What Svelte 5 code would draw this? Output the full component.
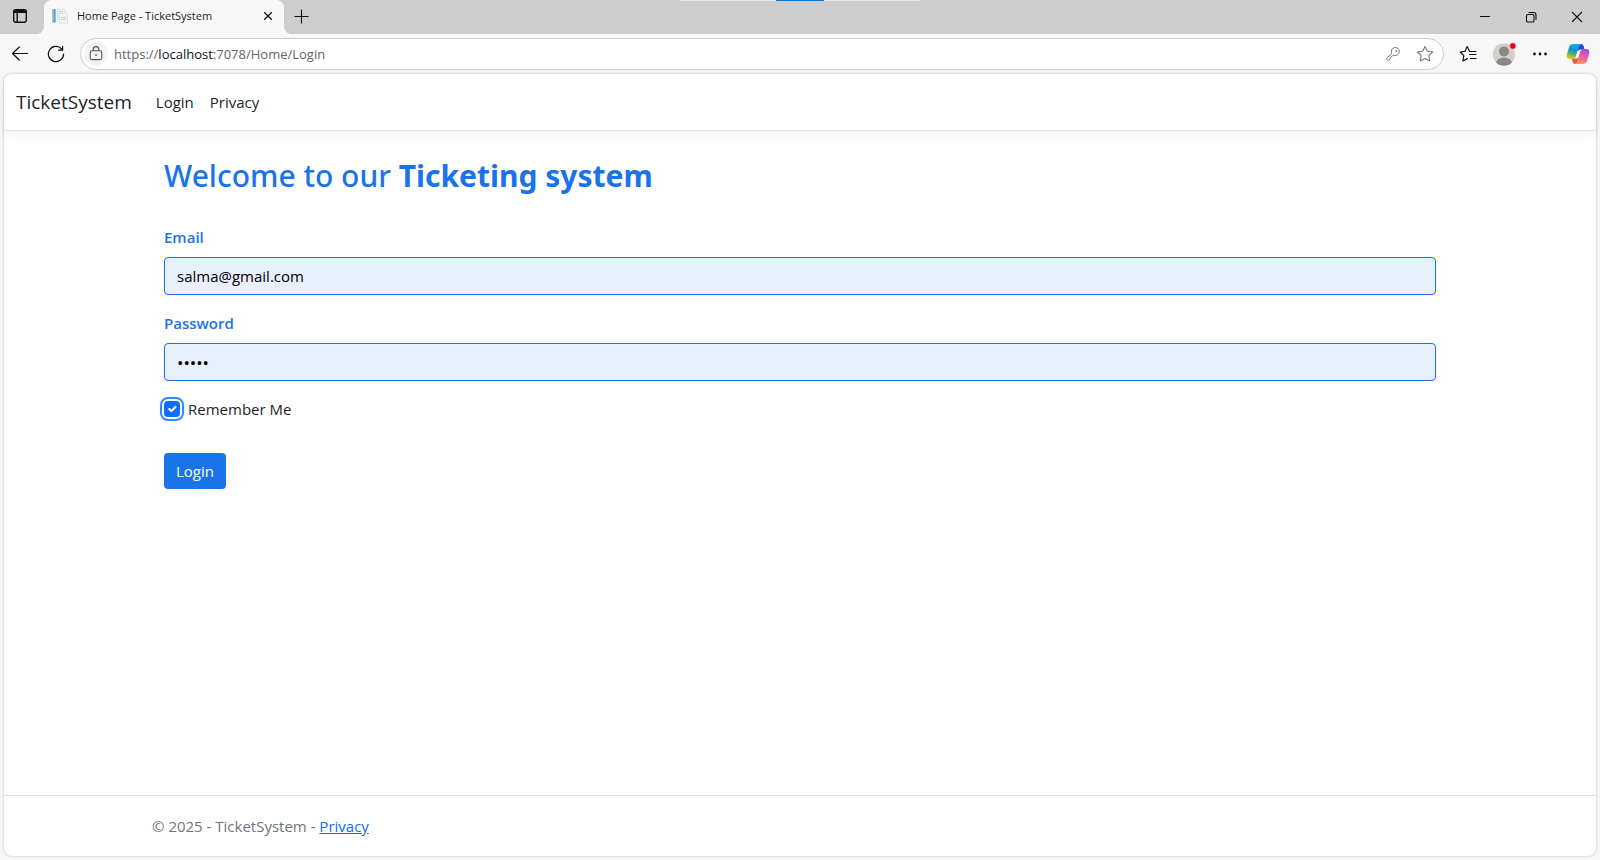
<script>
  let email = $state('salma@gmail.com');
  let password = $state('12345');
  let remember = $state(true);
</script>

<div class="browser">
  <header class="tabstrip">
    <button class="icon tabmenu" aria-label="Tab actions">
      <svg width="16" height="16" viewBox="0 0 16 16" fill="none" stroke="#111" stroke-width="1.4">
        <rect x="1.7" y="1.7" width="12.6" height="12.6" rx="2.2" />
        <path d="M2 2.6 Q2.4 2 3.4 2H12.6Q13.6 2 14 2.6V4.4H2Z" fill="#111" />
        <path d="M5.2 5V14" />
      </svg>
    </button>
    <div class="tab">
      <svg width="16" height="16" viewBox="0 0 16 16">
        <rect x="0.5" y="1" width="3.2" height="13.5" fill="#5aa4cf" />
        <rect x="0.5" y="1" width="1.2" height="13.5" fill="#8cc4e4" />
        <path d="M5.5 1H12L13.5 2.5V12H5.5Z" fill="#eceff3" stroke="#d3dae1" stroke-width=".6" />
        <path d="M7.5 5.5H13.5L15.5 7.5V15.3H7.5Z" fill="#f4f5f7" stroke="#cbd3db" stroke-width=".6" />
        <path d="M7 3.5H11M9 9.5H14M9 11.5H14" stroke="#bcc7d2" stroke-width=".9" />
      </svg>
      <span class="title">Home Page - TicketSystem</span>
      <button class="icon close" aria-label="Close tab">
        <svg width="10" height="10" viewBox="0 0 10 10" stroke="#111" stroke-width="1.3"><path d="M1.2 1.2L8.8 8.8M8.8 1.2L1.2 8.8" /></svg>
      </button>
    </div>
    <button class="icon newtab" aria-label="New tab">
      <svg width="16" height="16" viewBox="0 0 16 16" stroke="#111" stroke-width="1.1"><path d="M8.5 1.5V15.5M1.5 8.5H15.5" /></svg>
    </button>
    <div class="sharebar"><span></span></div>
    <div class="window">
      <button class="icon" aria-label="Minimize">
        <svg width="12" height="12" viewBox="0 0 12 12" stroke="#111"><path d="M1 5.5H11" /></svg>
      </button>
      <button class="icon" aria-label="Restore">
        <svg width="12" height="12" viewBox="0 0 12 12" fill="none" stroke="#111" stroke-width="1.1">
          <rect x="1.5" y="3.5" width="7.5" height="7.5" rx="1.3" />
          <path d="M3.5 1.5H8.6Q11 1.5 11 3.9V8.8" />
        </svg>
      </button>
      <button class="icon" aria-label="Close">
        <svg width="12" height="12" viewBox="0 0 12 12" stroke="#111" stroke-width="1.1"><path d="M1 1L11 11M11 1L1 11" /></svg>
      </button>
    </div>
  </header>

  <div class="toolbar">
    <button class="icon" aria-label="Back">
      <svg width="18" height="18" viewBox="0 0 18 18" fill="none" stroke="#111" stroke-width="1.2" stroke-linecap="round" stroke-linejoin="round"><path d="M8.3 2L1.5 8.5L8.3 15M1.5 8.5H16.7" /></svg>
    </button>
    <button class="icon" aria-label="Refresh">
      <svg width="18" height="18" viewBox="0 0 18 18" fill="none" stroke="#111" stroke-width="1.2" stroke-linecap="round" stroke-linejoin="round">
        <path d="M16.6 9A7.6 7.6 0 1 1 14.7 4L15.4 5" />
        <path d="M15.6 1.4V5.2H11.6" />
      </svg>
    </button>
    <div class="address">
      <span class="lock">
        <svg width="14" height="16" viewBox="0 0 14 16" fill="none" stroke="#555" stroke-width="1.1">
          <rect x="1.2" y="4.8" width="11.6" height="8.8" rx="1.6" />
          <path d="M4.2 4.8V3.4A2.8 2.8 0 0 1 9.8 3.4V4.8" />
          <circle cx="7" cy="9.2" r=".9" fill="#555" stroke="none" />
        </svg>
      </span>
      <span class="url">https://<b>localhost</b>:7078/Home/Login</span>
      <button class="icon" aria-label="Saved passwords">
        <svg width="16" height="16" viewBox="0 0 16 16" fill="none" stroke="#777" stroke-width="1" stroke-linejoin="round">
          <path d="M6.6 6.9A4 4 0 1 1 9.4 9.4L8 9.2L6.6 10.8L5.6 11.4L5.2 12.8L3.8 14Q2.6 14.6 1.8 13.6Q1.2 12.6 2 11.8L6.8 7.6Z" />
          <circle cx="11.3" cy="4.9" r=".9" fill="#777" stroke="none" />
        </svg>
      </button>
      <button class="icon" aria-label="Add to favorites">
        <svg width="18" height="18" viewBox="0 0 18 18" fill="none" stroke="#777" stroke-width="1.1" stroke-linejoin="round">
          <path d="M9 1.5L11.3 6.3L16.7 7L12.8 10.7L13.8 16L9 13.5L4.2 16L5.2 10.7L1.3 7L6.7 6.3Z" />
        </svg>
      </button>
    </div>
    <div class="actions">
      <button class="icon" aria-label="Favorites">
        <svg width="18" height="18" viewBox="0 0 18 18" fill="none" stroke="#111" stroke-width="1.2" stroke-linejoin="round" stroke-linecap="round">
          <path d="M11.6 6.5L10.4 6.3L8.2 1.6L6 6.3L1.2 7L4.8 10.7L3.9 16L8.4 13.6" />
          <path d="M11.5 6.5H17M10.5 9.5H17M11.5 13.5H17" />
        </svg>
      </button>
      <button class="icon" aria-label="Profile">
        <svg width="24" height="24" viewBox="0 0 24 24">
          <defs><clipPath id="avatar"><circle cx="12" cy="12.5" r="11.2" /></clipPath></defs>
          <circle cx="12" cy="12.5" r="11.2" fill="#d2d0ce" />
          <g fill="#8a8785" clip-path="url(#avatar)"><circle cx="12" cy="9.5" r="5" /><ellipse cx="12" cy="21" rx="7.8" ry="5.5" /></g>
          <circle cx="20.8" cy="4" r="3.2" fill="#e8000f" stroke="#f7f7f7" stroke-width=".6" />
        </svg>
      </button>
      <button class="icon" aria-label="Settings and more">
        <svg width="16" height="16" viewBox="0 0 16 16" fill="#111"><circle cx="2.5" cy="8" r="1.4" /><circle cx="8" cy="8" r="1.4" /><circle cx="13.5" cy="8" r="1.4" /></svg>
      </button>
      <button class="icon" aria-label="Copilot">
        <svg width="24" height="24" viewBox="0 0 24 24">
          <defs>
            <linearGradient id="cool" x1="0.6" y1="0" x2="0.3" y2="1">
              <stop offset="0" stop-color="#1aa8ee" /><stop offset=".4" stop-color="#128fd6" /><stop offset=".7" stop-color="#5dbb5a" /><stop offset="1" stop-color="#f6c515" />
            </linearGradient>
            <linearGradient id="warm" x1="0.7" y1="0" x2="0.3" y2="1">
              <stop offset="0" stop-color="#9b50ea" /><stop offset=".5" stop-color="#ef5c9c" /><stop offset="1" stop-color="#ff9a57" />
            </linearGradient>
          </defs>
          <path d="M11 2H15.2Q17 2 17.6 4L18.6 8H14Q12.8 8 12 9Z" fill="#1f4fcd" />
          <path d="M5.5 16H10Q11.5 16 12 14L13 17L11.5 20Q10.8 22 9 22Q7.4 22 6.8 20Z" fill="#f25534" />
          <path d="M7.3 2H15.2Q13.6 2.4 12.8 4.8L10.4 13.4Q9.4 17 6.8 17H3.6Q-.2 17 .9 12.6L3.1 5Q4.2 2 7.3 2Z" fill="url(#cool)" />
          <path d="M16.7 22H8.8Q10.4 21.6 11.2 19.2L13.6 10.6Q14.6 7 17.2 7H20.4Q24.2 7 23.1 11.4L20.9 19Q19.8 22 16.7 22Z" fill="url(#warm)" />
          <path d="M12.4 8.8Q13.2 7.4 15.6 7.4Q14.3 8.4 13.8 10.4L12.6 14.6Q11.6 17 8.6 16.8Q9.8 15.4 10.2 13.5L11 10.8Q11.5 9.2 12.4 8.8Z" fill="#f7f7f7" />
        </svg>
      </button>
    </div>
  </div>

  <div class="page">
    <nav>
      <a class="brand" href="#home">TicketSystem</a>
      <a href="#login">Login</a>
      <a href="#privacy">Privacy</a>
    </nav>
    <main class="container">
      <form onsubmit={(e) => e.preventDefault()}>
        <h1>Welcome to our <strong>Ticketing system</strong></h1>
        <div class="field">
          <label for="email">Email</label>
          <input id="email" type="email" bind:value={email} />
        </div>
        <div class="field">
          <label for="password">Password</label>
          <input id="password" type="password" bind:value={password} />
        </div>
        <div class="check">
          <input id="remember" type="checkbox" bind:checked={remember} />
          <label for="remember">Remember Me</label>
        </div>
        <button class="submit" type="submit">Login</button>
      </form>
    </main>
    <footer>
      <div class="container">© 2025 - TicketSystem - <a href="#privacy">Privacy</a></div>
    </footer>
  </div>
</div>

<style>
  :global(body) { margin: 0; }
  .browser, .browser * { box-sizing: border-box; }
  .browser {
    display: flex;
    flex-direction: column;
    min-height: 100vh;
    background: #f7f7f7;
    color: #212529;
    font: 15px/24px "Segoe UI", "Open Sans", "Noto Sans", sans-serif;
  }
  svg { display: block; flex: none; }
  .icon {
    display: grid;
    place-items: center;
    flex: none;
    padding: 0;
    border: 0;
    background: none;
  }

  .tabstrip { position: relative; display: flex; height: 34px; background: #cdcdcd; }
  .tabmenu { width: 44px; padding: 0 4px 2px 0; }
  .tab {
    position: relative;
    display: flex;
    align-items: center;
    gap: 9px;
    width: 240px;
    padding: 0 8px 2px;
    border-radius: 8px 8px 0 0;
    background: #f7f7f7;
    color: #1b1b1b;
    font-size: 11px;
  }
  .tab::before, .tab::after {
    content: "";
    position: absolute;
    bottom: 0;
    width: 8px;
    height: 8px;
  }
  .tab::before { right: 100%; background: radial-gradient(circle at 0 0, #cdcdcd 8px, #f7f7f7 8px); }
  .tab::after { left: 100%; background: radial-gradient(circle at 100% 0, #cdcdcd 8px, #f7f7f7 8px); }
  .title { flex: 1; white-space: nowrap; }
  .close { width: 16px; height: 16px; }
  .newtab { width: 34px; padding-bottom: 2px; }
  .sharebar {
    position: absolute;
    top: 0;
    left: 50%;
    width: 240px;
    height: 1px;
    margin-left: -120px;
    background: #e6e6e6;
  }
  .sharebar span { display: block; width: 48px; height: 1px; margin: 0 auto; background: #0078d4; }
  .window { display: flex; margin-left: auto; }
  .window .icon { width: 46px; }

  .toolbar { display: flex; align-items: center; height: 40px; padding: 0 2px; }
  .toolbar > .icon { width: 36px; height: 32px; }
  .address {
    display: flex;
    align-items: center;
    flex: 1;
    height: 32px;
    margin-left: 6px;
    padding: 0 2px 0 3px;
    border: 1px solid #cfcfcf;
    border-radius: 16px;
    background: #fff;
    color: #666;
    font-size: 13px;
  }
  .address .icon { width: 32px; height: 28px; }
  .lock { display: grid; place-items: center; width: 24px; height: 24px; border-radius: 12px; background: #f3f3f3; }
  .url { flex: 1; padding-left: 6px; }
  .url b { color: #111; font-weight: 400; }
  .actions { display: flex; align-items: center; padding-left: 6px; }
  .actions .icon { width: 36px; height: 32px; }
  .actions .icon:last-child { width: 40px; }

  .page {
    display: flex;
    flex-direction: column;
    flex: 1;
    margin: 0 4px 4px;
    border-radius: 8px;
    background: #fff;
    box-shadow: 0 0 3px #0000003d;
  }
  nav {
    display: flex;
    align-items: center;
    gap: 16px;
    height: 57px;
    padding: 0 12px;
    border-bottom: 1px solid #dee2e6;
    border-radius: 8px 8px 0 0;
    box-shadow: 0 4px 12px #0000000d;
  }
  nav a { color: #212529; text-decoration: none; }
  .brand { margin-right: 8px; font-size: 19px; line-height: 28px; }
  .container { width: 100%; max-width: 1320px; margin: 0 auto; padding: 0 12px; }
  main { flex: 1; }
  form { padding: 24px 12px; }
  h1 {
    margin: 0 0 28px;
    color: #1a73e8;
    font-family: "Segoe UI", "Noto Sans", sans-serif;
    font-size: 30px;
    font-weight: 500;
    line-height: 42px;
  }
  .field { margin-bottom: 16px; }
  .field label { display: block; margin-bottom: 8px; color: #1a73e8; font-weight: 600; }
  .field input {
    display: block;
    width: 100%;
    height: 38px;
    padding: 6px 12px;
    border: 1px solid #1a73e8;
    border-radius: 4px;
    background: #e8f0fe;
    color: #000;
    font: inherit;
  }
  .field input[type="password"] { font-size: 17px; }
  .check { display: flex; align-items: center; gap: 8px; }
  .check input {
    appearance: none;
    width: 16px;
    height: 16px;
    margin: 0;
    border-radius: 4px;
    outline: 2px solid #2a8cff;
    outline-offset: 2px;
    background: #fff;
    box-shadow: inset 0 0 0 1px #0d6efd;
  }
  .check input:checked {
    background: #0d6efd url("data:image/svg+xml,%3Csvg xmlns='http://www.w3.org/2000/svg' viewBox='0 0 20 20'%3E%3Cpath fill='none' stroke='%23fff' stroke-linecap='round' stroke-linejoin='round' stroke-width='3' d='m6 10 3 3 6-6'/%3E%3C/svg%3E") center / 14px no-repeat;
  }
  .submit {
    display: block;
    height: 36px;
    margin-top: 32px;
    padding: 0 12px;
    border: 0;
    border-radius: 4px;
    background: #1a73e8;
    color: #fff;
    font: inherit;
  }
  footer { border-top: 1px solid #dee2e6; color: #6c757d; line-height: 60px; }
  footer a { color: #0d6efd; }
</style>
